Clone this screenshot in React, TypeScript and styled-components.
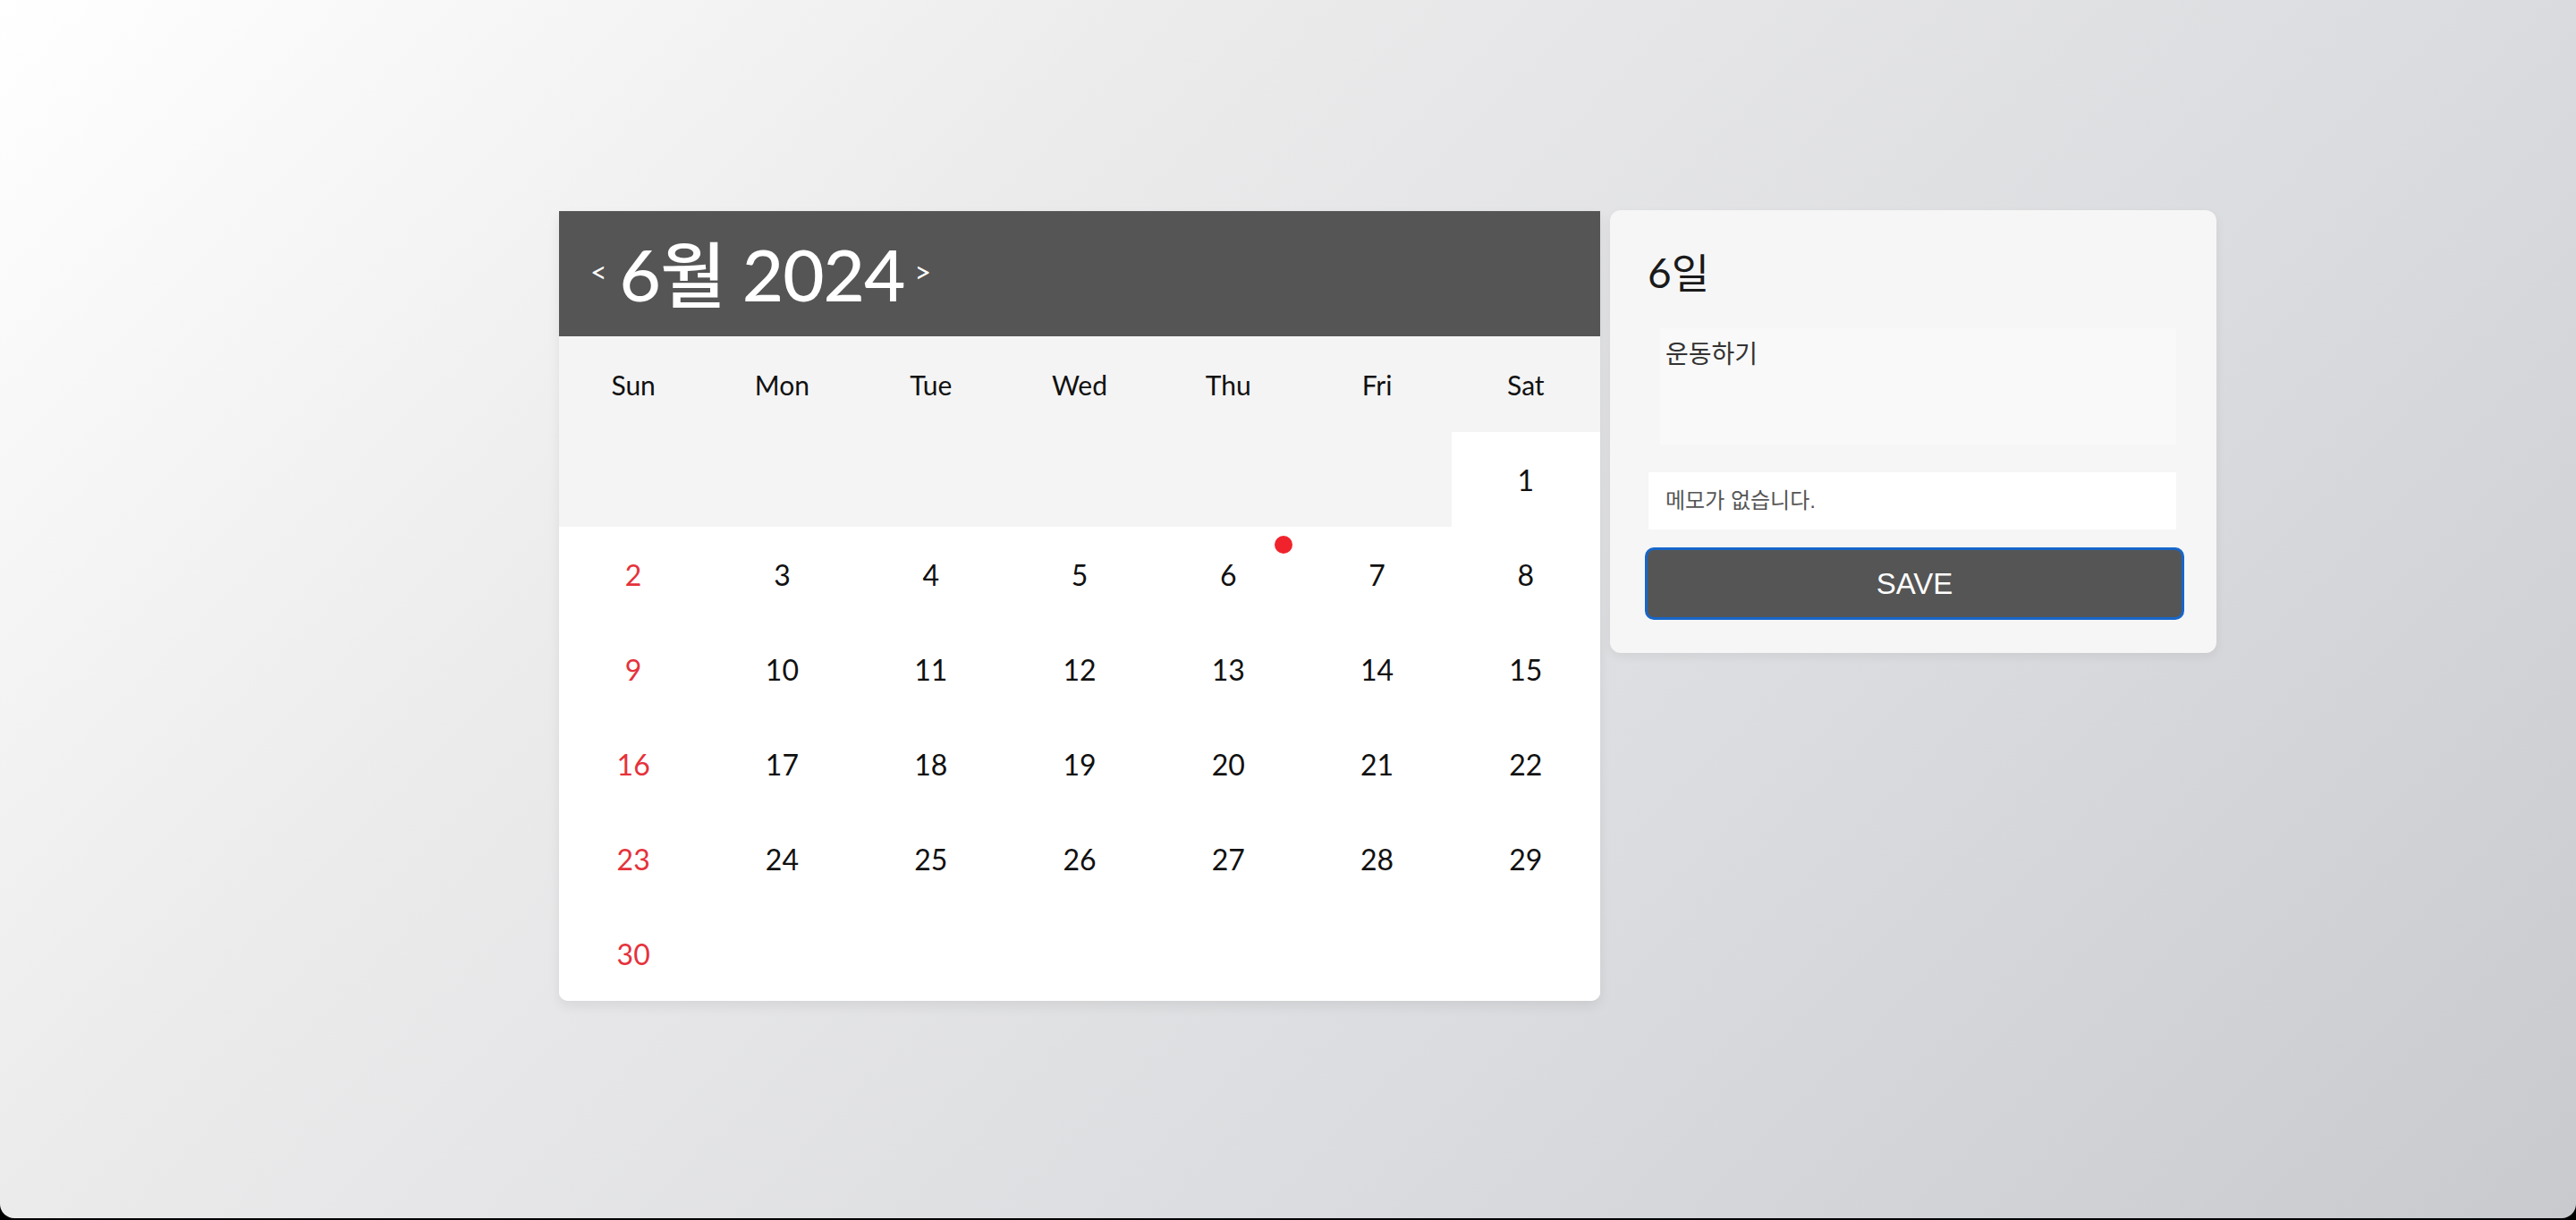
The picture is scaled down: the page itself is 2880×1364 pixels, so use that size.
import React from "react";
import styled, { createGlobalStyle } from "styled-components";

const GlobalStyle = createGlobalStyle`
  html, body {
    margin: 0;
    padding: 0;
    background: #000;
  }
  body {
    font-family: Lato, "Noto Sans CJK KR", sans-serif;
  }
  * { box-sizing: border-box; }
`;

const Page = styled.div`
  min-height: 1362px;
  background: linear-gradient(135deg, #ffffff 0%, #ebebec 32%, #dbdcdf 66%, #c8cacd 100%);
  border-radius: 0 0 16px 16px;
  display: flex;
  align-items: flex-start;
  gap: 11px;
  padding: 236px 0 0 625px;
`;

const Calendar = styled.section`
  width: 1164px;
  background: #fff;
  border-radius: 0 0 10px 10px;
  overflow: hidden;
  box-shadow: 0 6px 14px rgba(0, 0, 0, 0.07);
`;

const Header = styled.header`
  height: 140px;
  background: #555555;
  color: #fff;
  display: flex;
  align-items: center;
  padding-left: 35px;
`;

const Arrow = styled.button`
  background: none;
  border: none;
  padding: 0;
  color: #fff;
  font-family: Lato, sans-serif;
  font-size: 32px;
  line-height: 1;
  cursor: pointer;
  margin-top: -4px;
`;

const Title = styled.h1`
  margin: 0 11px 0 14px;
  font-family: Lato, "Noto Sans CJK KR", sans-serif;
  font-weight: 500;
  font-size: 80px;
  line-height: 1;
  letter-spacing: -1px;
`;

const WeekRow = styled.div`
  display: grid;
  grid-template-columns: repeat(7, 1fr);
  background: #f4f4f4;
  height: 107px;
`;

const WeekDay = styled.div`
  display: flex;
  align-items: center;
  justify-content: center;
  font-size: 30px;
  color: #111;
`;

const DaysGrid = styled.div`
  display: grid;
  grid-template-columns: repeat(7, 1fr);
  grid-auto-rows: 106px;
`;

const DayCell = styled.div<{ $lead?: boolean; $sunday?: boolean }>`
  position: relative;
  display: flex;
  align-items: center;
  justify-content: center;
  font-size: 32px;
  background: ${(p) => (p.$lead ? "#f4f4f4" : "#ffffff")};
  color: ${(p) => (p.$sunday ? "#e5323b" : "#111")};
  cursor: ${(p) => (p.$lead ? "default" : "pointer")};
`;

const Dot = styled.span`
  position: absolute;
  top: 10px;
  right: 11px;
  width: 20px;
  height: 20px;
  border-radius: 50%;
  background: #f0232c;
`;

const Panel = styled.aside`
  width: 678px;
  height: 495px;
  margin-top: -1px;
  background: #f6f6f6;
  border-radius: 12px;
  box-shadow: 0 4px 12px rgba(0, 0, 0, 0.06);
  padding: 40px 36px 37px 39px;
  display: flex;
  flex-direction: column;
`;

const PanelTitle = styled.h2`
  margin: 0;
  height: 60px;
  line-height: 60px;
  font-family: Lato, "Noto Sans CJK KR", sans-serif;
  font-weight: 400;
  font-size: 46px;
  color: #1a1a1a;
  padding-left: 3px;
`;

const Todo = styled.div`
  margin: 32px 9px 0 17px;
  height: 130px;
  background: #f9f9f9;
  padding: 12px 6px;
  font-family: "Liberation Sans", "Noto Sans CJK KR", sans-serif;
  font-size: 28px;
  line-height: 36px;
  color: #333;
`;

const MemoInput = styled.input`
  margin: 31px 9px 0 4px;
  height: 64px;
  border: none;
  outline: none;
  background: #fff;
  padding: 0 19px;
  font-family: "Liberation Sans", "Noto Sans CJK KR", sans-serif;
  font-size: 24px;
  color: #333;
  &::placeholder {
    color: #555;
  }
`;

const SaveButton = styled.button`
  margin-top: 20px;
  height: 81px;
  background: #555555;
  border: 3px solid #1766c9;
  border-radius: 10px;
  color: #fff;
  font-family: "Liberation Sans", Arial, sans-serif;
  font-size: 33px;
  cursor: pointer;
`;

const WEEK = ["Sun", "Mon", "Tue", "Wed", "Thu", "Fri", "Sat"];

export default function App() {
  const lead = 6;
  const days = 30;
  const cells: { day?: number; lead?: boolean }[] = [];
  for (let i = 0; i < lead; i++) cells.push({ lead: true });
  for (let d = 1; d <= days; d++) cells.push({ day: d });
  while (cells.length % 7 !== 0) cells.push({});

  return (
    <>
      <GlobalStyle />
      <Page>
        <Calendar>
          <Header>
            <Arrow>&lt;</Arrow>
            <Title>6월 2024</Title>
            <Arrow>&gt;</Arrow>
          </Header>
          <WeekRow>
            {WEEK.map((w) => (
              <WeekDay key={w}>{w}</WeekDay>
            ))}
          </WeekRow>
          <DaysGrid>
            {cells.map((c, i) => (
              <DayCell key={i} $lead={c.lead} $sunday={i % 7 === 0}>
                {c.day ?? ""}
                {c.day === 6 && <Dot />}
              </DayCell>
            ))}
          </DaysGrid>
        </Calendar>
        <Panel>
          <PanelTitle>6일</PanelTitle>
          <Todo>운동하기</Todo>
          <MemoInput placeholder="메모가 없습니다." />
          <SaveButton>SAVE</SaveButton>
        </Panel>
      </Page>
    </>
  );
}
